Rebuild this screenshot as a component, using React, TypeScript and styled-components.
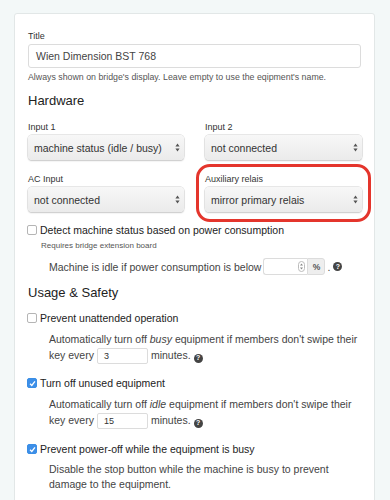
import React from "react";
import styled, { createGlobalStyle } from "styled-components";

const GlobalStyle = createGlobalStyle`
  body {
    margin: 0;
    background: #f3f8f8;
    font-family: "Liberation Sans", Arial, sans-serif;
    color: #333;
  }
`;

const Page = styled.div`
  padding: 13px 15px 0 14px;
`;

const Card = styled.section`
  background: #fff;
  border: 1px solid #e2e7e7;
  border-radius: 3px;
  padding: 16px 13px 20px;
`;

const Label = styled.div`
  font-size: 9px;
  line-height: 12px;
  margin-bottom: 2px;
  color: #333;
`;

const TextInput = styled.div`
  height: 24px;
  box-sizing: border-box;
  border: 1px solid #dcdcdc;
  border-radius: 3px;
  padding: 0 7px;
  display: flex;
  align-items: center;
  font-size: 10.5px;
  color: #444;
`;

const Help = styled.div`
  font-size: 8.8px;
  line-height: 12px;
  color: #555;
  margin-top: 3px;
`;

const Heading = styled.h3`
  margin: 10px 0 0;
  font-size: 13px;
  font-weight: 400;
  line-height: 16px;
  color: #222;
`;

const Grid = styled.div`
  display: grid;
  grid-template-columns: 156px 157px;
  column-gap: 21px;
  row-gap: 13px;
  margin-top: 12px;
`;

const Field = styled.div<{ $marked?: boolean }>`
  position: relative;
  &::after {
    content: "";
    display: ${(p) => (p.$marked ? "block" : "none")};
    position: absolute;
    inset: -9px -9px -10px -9px;
    border: 3px solid #e4352c;
    border-radius: 14px;
    pointer-events: none;
  }
`;

const Select = styled.div`
  height: 25px;
  box-sizing: border-box;
  border-radius: 4px;
  background: linear-gradient(#f7f7f7, #ebebeb);
  box-shadow: 0 0 0 0.5px #d0d0d0, 0 1px 1.5px rgba(0, 0, 0, 0.22);
  display: flex;
  align-items: center;
  justify-content: space-between;
  padding: 0 4px 0 6px;
  font-size: 10.5px;
  color: #333;
  white-space: nowrap;
`;

const CheckRow = styled.label<{ $top: number }>`
  display: flex;
  align-items: center;
  gap: 3px;
  font-size: 10.5px;
  line-height: 16px;
  color: #222;
  margin-top: ${(p) => p.$top}px;
`;

const Box = styled.span<{ $checked?: boolean }>`
  width: 10px;
  height: 10px;
  box-sizing: border-box;
  border-radius: 2px;
  border: 1px solid ${(p) => (p.$checked ? "#3a8ee6" : "#b5b5b5")};
  background: ${(p) => (p.$checked ? "#3d8fe8" : "#fff")};
  display: flex;
  align-items: center;
  justify-content: center;
  flex-shrink: 0;
  margin-left: -1px;
`;

const Small = styled.div`
  font-size: 8px;
  line-height: 12px;
  color: #555;
  margin: 2px 0 0 13px;
`;

const Indented = styled.div<{ $top: number; $lh?: number }>`
  margin: ${(p) => p.$top}px 0 0 21px;
  font-size: 10.5px;
  line-height: ${(p) => p.$lh ?? 16}px;
  color: #444;
  white-space: nowrap;
`;

const InlineRow = styled.div`
  display: flex;
  align-items: center;
  height: 17px;
`;

const NumGroup = styled.span`
  display: inline-flex;
  height: 17px;
  margin: 0 2px 0 2px;
`;

const NumInput = styled.span`
  width: 44px;
  box-sizing: border-box;
  border: 1px solid #dcdcdc;
  border-right: none;
  border-radius: 3px 0 0 3px;
  display: flex;
  align-items: center;
  justify-content: flex-end;
  padding-right: 2px;
`;

const Addon = styled.span`
  width: 18px;
  box-sizing: border-box;
  background: #eeeeee;
  border: 1px solid #dcdcdc;
  border-radius: 0 3px 3px 0;
  font-size: 8.5px;
  font-weight: 700;
  display: flex;
  align-items: center;
  justify-content: center;
  color: #555;
`;

const MinuteInput = styled.span`
  display: inline-flex;
  align-items: center;
  width: 51px;
  height: 16px;
  box-sizing: border-box;
  border: 1px solid #dcdcdc;
  border-radius: 2px;
  padding-left: 6px;
  margin: 0 3px 0 3px;
  font-size: 9px;
  color: #333;
  vertical-align: middle;
`;

const HelpIcon = styled.span`
  display: inline-flex;
  align-items: center;
  justify-content: center;
  width: 9px;
  height: 9px;
  border-radius: 50%;
  background: #444;
  color: #fff;
  font-size: 7px;
  font-weight: 700;
  margin-left: 3px;
  vertical-align: -1px;
`;

const Arrows = () => (
  <svg width="5" height="9" viewBox="0 0 5 9">
    <path d="M2.5 0.5 L4.6 3.6 H0.4 Z M2.5 8.5 L0.4 5.4 H4.6 Z" fill="#555" />
  </svg>
);

const Spinner = () => (
  <svg width="7" height="11" viewBox="0 0 7 11">
    <rect x="0.5" y="0.5" width="6" height="10" rx="3" fill="none" stroke="#bbb" />
    <path d="M3.5 2.5 L5 4.5 H2 Z M3.5 8.5 L2 6.5 H5 Z" fill="#888" />
  </svg>
);

const Tick = () => (
  <svg width="7" height="7" viewBox="0 0 8 8">
    <path d="M1.2 4.2 L3.2 6.2 L6.8 1.6" fill="none" stroke="#fff" strokeWidth="1.5" />
  </svg>
);

function Check({ checked, top, children }: { checked?: boolean; top: number; children: React.ReactNode }) {
  return (
    <CheckRow $top={top}>
      <Box $checked={checked}>{checked && <Tick />}</Box>
      {children}
    </CheckRow>
  );
}

function SelectField({ label, value, marked }: { label: string; value: string; marked?: boolean }) {
  return (
    <Field $marked={marked}>
      <Label>{label}</Label>
      <Select>
        {value}
        <Arrows />
      </Select>
    </Field>
  );
}

export default function App() {
  return (
    <Page>
      <GlobalStyle />
      <Card>
        <Label>Title</Label>
        <TextInput>Wien Dimension BST 768</TextInput>
        <Help>Always shown on bridge's display. Leave empty to use the eqipment's name.</Help>

        <Heading>Hardware</Heading>
        <Grid>
          <SelectField label="Input 1" value="machine status (idle / busy)" />
          <SelectField label="Input 2" value="not connected" />
          <SelectField label="AC Input" value="not connected" />
          <SelectField label="Auxiliary relais" value="mirror primary relais" marked />
        </Grid>

        <Check top={10}>Detect machine status based on power consumption</Check>
        <Small>Requires bridge extension board</Small>
        <Indented $top={6}>
          <InlineRow>
            Machine is idle if power consumption is below
            <NumGroup>
              <NumInput>
                <Spinner />
              </NumInput>
              <Addon>%</Addon>
            </NumGroup>
            .<HelpIcon>?</HelpIcon>
          </InlineRow>
        </Indented>

        <Heading>Usage &amp; Safety</Heading>
        <Check top={9}>Prevent unattended operation</Check>
        <Indented $top={5}>
          Automatically turn off <i>busy</i> equipment if members don't swipe their
          <br />
          key every<MinuteInput>3</MinuteInput>minutes.<HelpIcon>?</HelpIcon>
        </Indented>

        <Check checked top={11}>Turn off unused equipment</Check>
        <Indented $top={5}>
          Automatically turn off <i>idle</i> equipment if members don't swipe their
          <br />
          key every<MinuteInput>15</MinuteInput>minutes.<HelpIcon>?</HelpIcon>
        </Indented>

        <Check checked top={12}>Prevent power-off while the equipment is busy</Check>
        <Indented $top={5} $lh={15}>
          Disable the stop button while the machine is busy to prevent
          <br />
          damage to the equipment.
        </Indented>
      </Card>
    </Page>
  );
}
